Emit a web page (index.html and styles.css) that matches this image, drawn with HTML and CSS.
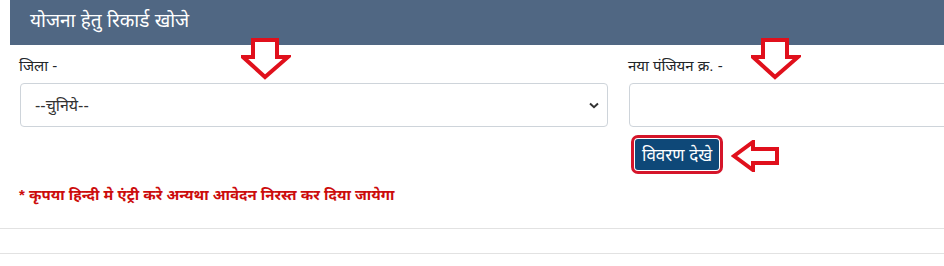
FILE: index.html
```html
<!DOCTYPE html>
<html lang="hi">
<head>
<meta charset="utf-8">
<link rel="stylesheet" href="styles.css">
</head>
<body>
<div class="page">
  <div class="panel-head">योजना हेतु रिकार्ड खोजे</div>
  <div class="form-row">
    <div class="col">
      <label class="lbl">जिला -</label>
      <div class="select">
        <span>--चुनिये--</span>
        <svg class="chev" width="10" height="7" viewBox="0 0 10 7"><path d="M1 1.5 L5 5.2 L9 1.5" fill="none" stroke="#333" stroke-width="2"/></svg>
      </div>
    </div>
    <div class="col">
      <label class="lbl">नया पंजियन क्र. -</label>
      <div class="input"></div>
      <div class="btn-row">
        <button class="btn">विवरण देखे</button>
      </div>
    </div>
  </div>
  <p class="note">* कृपया हिन्दी मे एंट्री करे अन्यथा आवेदन निरस्त कर दिया जायेगा</p>
  <div class="rule rule-a"></div>
  <div class="rule rule-b"></div>

  <svg class="arrow arrow-d1" width="50" height="42" viewBox="0 0 50 42"><path d="M12 2 H36 V19 H47 L24 39 L2 19 H12 Z" fill="#fff" stroke="#e0101c" stroke-width="4" stroke-linejoin="miter"/></svg>
  <svg class="arrow arrow-d2" width="50" height="42" viewBox="0 0 50 42"><path d="M12 2 H36 V19 H47 L24 39 L2 19 H12 Z" fill="#fff" stroke="#e0101c" stroke-width="4" stroke-linejoin="miter"/></svg>
  <svg class="arrow arrow-l" width="48" height="32" viewBox="0 0 48 32"><path d="M46 9 H22 V2 L3 16 L22 30 V23 H46 Z" fill="#fff" stroke="#e0101c" stroke-width="4" stroke-linejoin="miter"/></svg>
</div>
</body>
</html>
```

FILE: styles.css
```css
html, body {
  margin: 0;
  padding: 0;
  background: #fff;
  overflow: hidden;
}
body {
  width: 944px;
  height: 266px;
  font-family: "Liberation Sans", "Noto Sans", sans-serif;
  color: #212529;
}
.page {
  position: relative;
  width: 944px;
  height: 266px;
}
.panel-head {
  margin-left: 10px;
  height: 45px;
  background: #506783;
  color: #fff;
  font-size: 19px;
  line-height: 42px;
  padding-left: 20px;
}
.form-row {
  display: grid;
  grid-template-columns: 589px 340px;
  column-gap: 20px;
  padding-left: 19px;
  margin-top: 10px;
}
.col {
  display: flex;
  flex-direction: column;
}
.lbl {
  font-size: 15px;
  line-height: 22px;
  height: 28px;
  color: #212529;
}
.select, .input {
  box-sizing: border-box;
  height: 44px;
  border: 1px solid #ced4da;
  border-radius: 4px;
  background: #fff;
}
.select {
  margin-left: 1px;
  display: flex;
  align-items: center;
  justify-content: space-between;
  padding: 0 8px 0 14px;
  font-size: 16px;
  color: #333;
}
.input {
  margin-left: 1px;
  width: 340px;
}
.btn-row {
  padding: 12px 0 0 7px;
}
.btn {
  font-family: inherit;
  font-size: 17px;
  color: #fff;
  background: #0e4878;
  border: none;
  border-radius: 3px;
  height: 31px;
  padding: 0 7px;
  outline: 3px solid #d5152a;
  outline-offset: 1px;
}
.note {
  margin: 14px 0 0 19px;
  font-size: 15px;
  font-weight: bold;
  color: #cc0c0c;
}
.rule {
  position: absolute;
  left: 0;
  right: 0;
  height: 0;
  border-top: 1px solid #e2e2e2;
}
.rule-a { top: 228px; }
.rule-b { top: 253px; }
.arrow {
  position: absolute;
}
.arrow-d1 { left: 241px; top: 38px; }
.arrow-d2 { left: 751px; top: 38px; }
.arrow-l { left: 731px; top: 140px; }
```
